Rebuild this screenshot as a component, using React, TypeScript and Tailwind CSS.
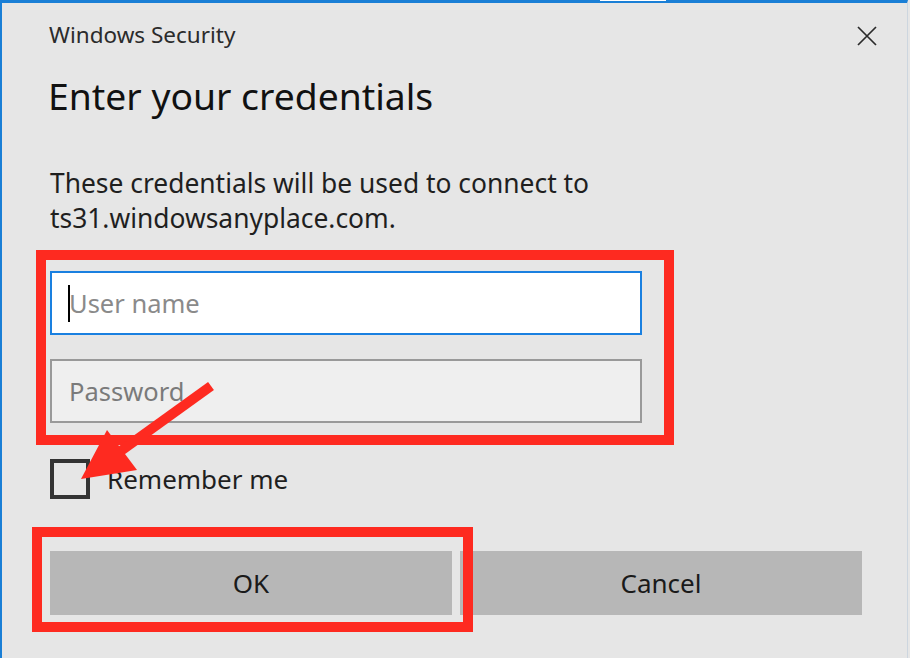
import React from "react";

export default function App() {
  return (
    <div className="relative w-[910px] h-[658px] overflow-hidden bg-[#e6e6e6] font-['Noto_Sans',sans-serif]">
      {/* Dialog frame */}
      <div className="h-full w-[908px] border-t-[3px] border-l-2 border-r border-t-[#1a7fd6] border-l-[#1a7fd6] border-r-[#cdd6df] bg-[#e6e6e6]">
        {/* Title row */}
        <div className="flex items-start justify-between pl-[47px] pr-[30px] pt-[17px]">
          <div className="text-[22.5px] leading-[30px] text-[#2b2b2b]">Windows Security</div>
          <svg width="20" height="20" viewBox="0 0 20 20" className="mt-[6px]">
            <path d="M1 1L19 19M19 1L1 19" stroke="#2b2b2b" strokeWidth="1.7" />
          </svg>
        </div>

        <div className="pl-[48px]">
          <h1 className="mt-[22px] ml-[-2px] text-[37.3px] leading-[48px] text-[#111]">Enter your credentials</h1>

          <p className="mt-[46px] text-[26.4px] leading-[35px] text-[#1f1f1f]">
            These credentials will be used to connect to
            <br />
            ts31.windowsanyplace.com.
          </p>

          {/* Inputs */}
          <div className="mt-[35px] flex flex-col gap-[24px] w-[592px]">
            <div className="h-[64px] flex items-center border-2 border-[#1a80e0] bg-white pl-[16px]">
              <span className="w-[2px] h-[37px] bg-black" />
              <span className="ml-[-1px] text-[25.5px] text-[#8a8a8a]">User name</span>
            </div>
            <div className="h-[64px] flex items-center border-2 border-[#999999] bg-[#efefef] pl-[17px]">
              <span className="text-[25.5px] text-[#7a7a7a]">Password</span>
            </div>
          </div>

          {/* Remember me */}
          <div className="mt-[36px] flex items-center gap-[17px] h-[40px]">
            <div className="w-[40px] h-[40px] border-4 border-[#333]" />
            <span className="text-[26px] leading-[38px] text-[#1f1f1f]">Remember me</span>
          </div>

          {/* Buttons */}
          <div className="mt-[52px] flex gap-[8px] w-[812px]">
            <div className="flex-1 h-[64px] flex items-center justify-center bg-[#b7b7b7] text-[26px] text-[#1a1a1a]">
              OK
            </div>
            <div className="flex-1 h-[64px] flex items-center justify-center bg-[#b7b7b7] text-[26px] text-[#1a1a1a]">
              Cancel
            </div>
          </div>
        </div>
      </div>

      {/* small white piece on top frame */}
      <div className="absolute top-0 left-[600px] w-[66px] h-[1px] bg-white" />

      {/* Annotations */}
      <div className="absolute left-[36px] top-[250px] w-[638px] h-[195px] border-[10px] border-[#fe2a20]" />
      <div className="absolute left-[32px] top-[527px] w-[441px] h-[105px] border-[10px] border-[#fe2a20]" />
      <svg className="absolute left-0 top-0" width="910" height="658" viewBox="0 0 910 658">
        <line x1="211" y1="386" x2="118" y2="453" stroke="#fe2a20" strokeWidth="10" />
        <polygon points="81,479 107,430 137,470" fill="#fe2a20" />
      </svg>
    </div>
  );
}
